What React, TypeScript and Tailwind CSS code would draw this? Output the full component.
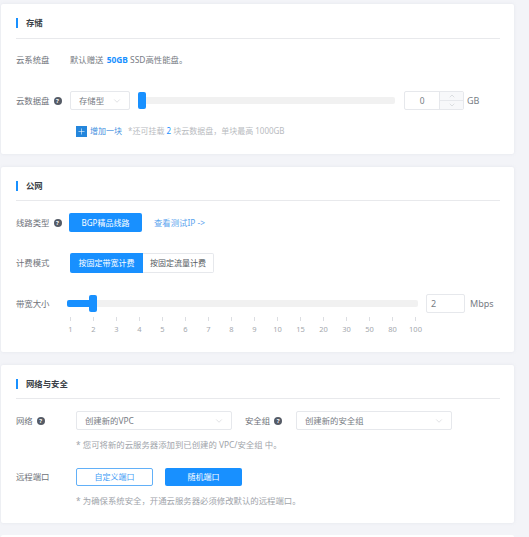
import React from 'react';
import { ChevronDown, ChevronUp, Plus } from 'lucide-react';

const bandwidth = ['1', '2', '3', '4', '5', '6', '7', '8', '9', '10', '15', '20', '30', '50', '80', '100'];

const Help = () => (
  <span className="ml-[4px] flex h-[8px] w-[8px] shrink-0 items-center justify-center rounded-full bg-[#555b66] text-[6px] font-bold leading-none text-white">
    ?
  </span>
);

const Label = ({ children, help }: { children: React.ReactNode; help?: boolean }) => (
  <div className="flex items-center whitespace-nowrap text-[#6e7279]">
    {children}
    {help && <Help />}
  </div>
);

const SectionHead = ({ title, height = 'h-[34px]' }: { title: string; height?: string }) => (
  <div className={`flex items-start border-b border-[#e8e9ec] pt-[14px] ${height}`}>
    <div className="h-[10px] w-[2px] bg-[#1890ff]" />
    <div className="ml-[8px] text-[8.4px] font-bold leading-[10px] text-[#3a3f47]">{title}</div>
  </div>
);

const Select = ({ text, width }: { text: string; width: string }) => (
  <div className={`flex h-[19px] items-center justify-between rounded-[2px] border border-[#e6e8ec] bg-white pl-[8px] pr-[7px] text-[#777c84] ${width}`}>
    <span className="whitespace-nowrap">{text}</span>
    <ChevronDown size={10} strokeWidth={1} className="text-[#b5b9c0]" />
  </div>
);

export default function App() {
  return (
    <div
      className="h-[537px] w-[529px] overflow-hidden bg-[#f3f4f8] pl-[1px] pt-[4px] text-[8.4px] leading-[12px]"
      style={{ fontFamily: '"Noto Sans", "Noto Sans CJK SC", sans-serif' }}
    >
      {/* 存储 */}
      <section className="h-[150px] w-[513px] rounded-[2px] bg-white pl-[15px] pr-[14px] shadow-[0_0_3px_rgba(180,185,200,0.25)]">
        <SectionHead title="存储" height="h-[35px]" />
        <div className="mt-[15px] flex items-center">
          <div className="w-[54px] whitespace-nowrap text-[#6e7279]">云系统盘</div>
          <div className="whitespace-nowrap text-[#777c84]">
            默认赠送 <span className="ml-[1px] font-bold text-[#1890ff]">50GB</span> SSD高性能盘。
          </div>
        </div>
        <div className="mt-[25px] flex h-[19px] items-center">
          <div className="w-[54px]">
            <Label help>云数据盘</Label>
          </div>
          <Select text="存储型" width="w-[60px]" />
          <div className="relative ml-[8px] h-[7px] w-[257px] rounded-[2px] bg-[#f1f1f1]">
            <div className="absolute left-0 top-[-5px] h-[17px] w-[8px] rounded-[2px] bg-[#1890ff]" />
          </div>
          <div className="ml-[9px] flex h-[19px] w-[60px] rounded-[2px] border border-[#e6e8ec]">
            <div className="flex w-[35px] items-center justify-center text-[#777c84]">0</div>
            <div className="flex w-[24px] flex-col border-l border-[#e6e8ec] bg-[#f7f8fa]">
              <div className="flex flex-1 items-center justify-center border-b border-[#e6e8ec]">
                <ChevronUp size={8} strokeWidth={1} className="text-[#a5a9b0]" />
              </div>
              <div className="flex flex-1 items-center justify-center">
                <ChevronDown size={8} strokeWidth={1} className="text-[#a5a9b0]" />
              </div>
            </div>
          </div>
          <div className="ml-[3px] text-[9px] text-[#777c84]">GB</div>
        </div>
        <div className="ml-[60px] mt-[15px] flex items-center whitespace-nowrap text-[8px]">
          <div className="flex h-[11px] w-[11px] items-center justify-center bg-[#2486dc]">
            <Plus size={9} strokeWidth={1.5} className="text-white" />
          </div>
          <span className="ml-[3px] text-[#3f8fe0]">增加一块</span>
          <span className="ml-[6px] text-[#b8bbc0]">
            *还可挂载 <span className="text-[#1890ff]">2</span> 块云数据盘，单块最高 1000GB
          </span>
        </div>
      </section>

      {/* 公网 */}
      <section className="mt-[13px] h-[185px] w-[513px] rounded-[2px] bg-white pl-[15px] pr-[14px] shadow-[0_0_3px_rgba(180,185,200,0.25)]">
        <SectionHead title="公网" />
        <div className="mt-[12px] flex h-[19px] items-center">
          <div className="w-[53px]">
            <Label help>线路类型</Label>
          </div>
          <div className="flex h-[19px] w-[73px] items-center justify-center rounded-[2px] bg-[#1890ff] text-[8px] text-white">BGP精品线路</div>
          <div className="ml-[12px] whitespace-nowrap text-[#5ba4ee]">查看测试IP -&gt;</div>
        </div>
        <div className="mt-[21px] flex h-[20px] items-center">
          <div className="w-[54px]">
            <Label>计费模式</Label>
          </div>
          <div className="flex h-[20px] w-[73px] items-center justify-center rounded-l-[2px] bg-[#1890ff] text-[8px] text-white">按固定带宽计费</div>
          <div className="flex h-[20px] w-[71px] items-center justify-center rounded-r-[2px] border border-l-0 border-[#e6e8ec] text-[8px] text-[#555a62]">按固定流量计费</div>
        </div>
        <div className="mt-[21px] flex h-[19px] items-center">
          <div className="w-[51px]">
            <Label>带宽大小</Label>
          </div>
          <div className="relative h-[7px] w-[351px] rounded-[2px] bg-[#f1f1f1]">
            <div className="h-[7px] w-[24px] rounded-l-[2px] bg-[#1890ff]" />
            <div className="absolute left-[22px] top-[-5px] h-[17px] w-[8px] rounded-[2px] bg-[#1890ff]" />
          </div>
          <div className="ml-[8px] flex h-[19px] w-[39px] items-center rounded-[2px] border border-[#e6e8ec] pl-[4px] text-[9px] text-[#777c84]">2</div>
          <div className="ml-[5px] text-[9px] text-[#777c84]">Mbps</div>
        </div>
        <div className="ml-[43px] mt-[4px] flex">
          {bandwidth.map(n => (
            <div key={n} className="flex w-[23px] flex-col items-center">
              <div className="h-[4px] w-px bg-[#dcdee2]" />
              <div className="mt-[3px] text-[7.5px] leading-[11px] text-[#a3a7ad]">{n}</div>
            </div>
          ))}
        </div>
      </section>

      {/* 网络与安全 */}
      <section className="mt-[13px] h-[158px] w-[513px] rounded-[2px] bg-white pl-[15px] pr-[14px] shadow-[0_0_3px_rgba(180,185,200,0.25)]">
        <SectionHead title="网络与安全" />
        <div className="mt-[12px] flex h-[19px] items-center">
          <div className="w-[60px]">
            <Label help>网络</Label>
          </div>
          <Select text="创建新的VPC" width="w-[156px]" />
          <div className="ml-[13px] w-[51px]">
            <Label help>安全组</Label>
          </div>
          <Select text="创建新的安全组" width="w-[156px]" />
        </div>
        <div className="ml-[60px] mt-[9px] whitespace-nowrap text-[#a0a4aa]">* 您可将新的云服务器添加到已创建的 VPC/安全组 中。</div>
        <div className="mt-[17px] flex h-[18px] items-center">
          <div className="w-[60px]">
            <Label>远程端口</Label>
          </div>
          <div className="flex h-[18px] w-[77px] items-center justify-center rounded-[2px] border border-[#62b0f8] text-[8px] text-[#3f9cf5]">自定义端口</div>
          <div className="ml-[12px] flex h-[18px] w-[77px] items-center justify-center rounded-[2px] bg-[#1890ff] text-[8px] text-white">随机端口</div>
        </div>
        <div className="ml-[60px] mt-[9px] whitespace-nowrap text-[#a0a4aa]">* 为确保系统安全，开通云服务器必须修改默认的远程端口。</div>
      </section>

      <section className="mt-[12px] h-[20px] w-[513px] rounded-[2px] bg-white" />
    </div>
  );
}
